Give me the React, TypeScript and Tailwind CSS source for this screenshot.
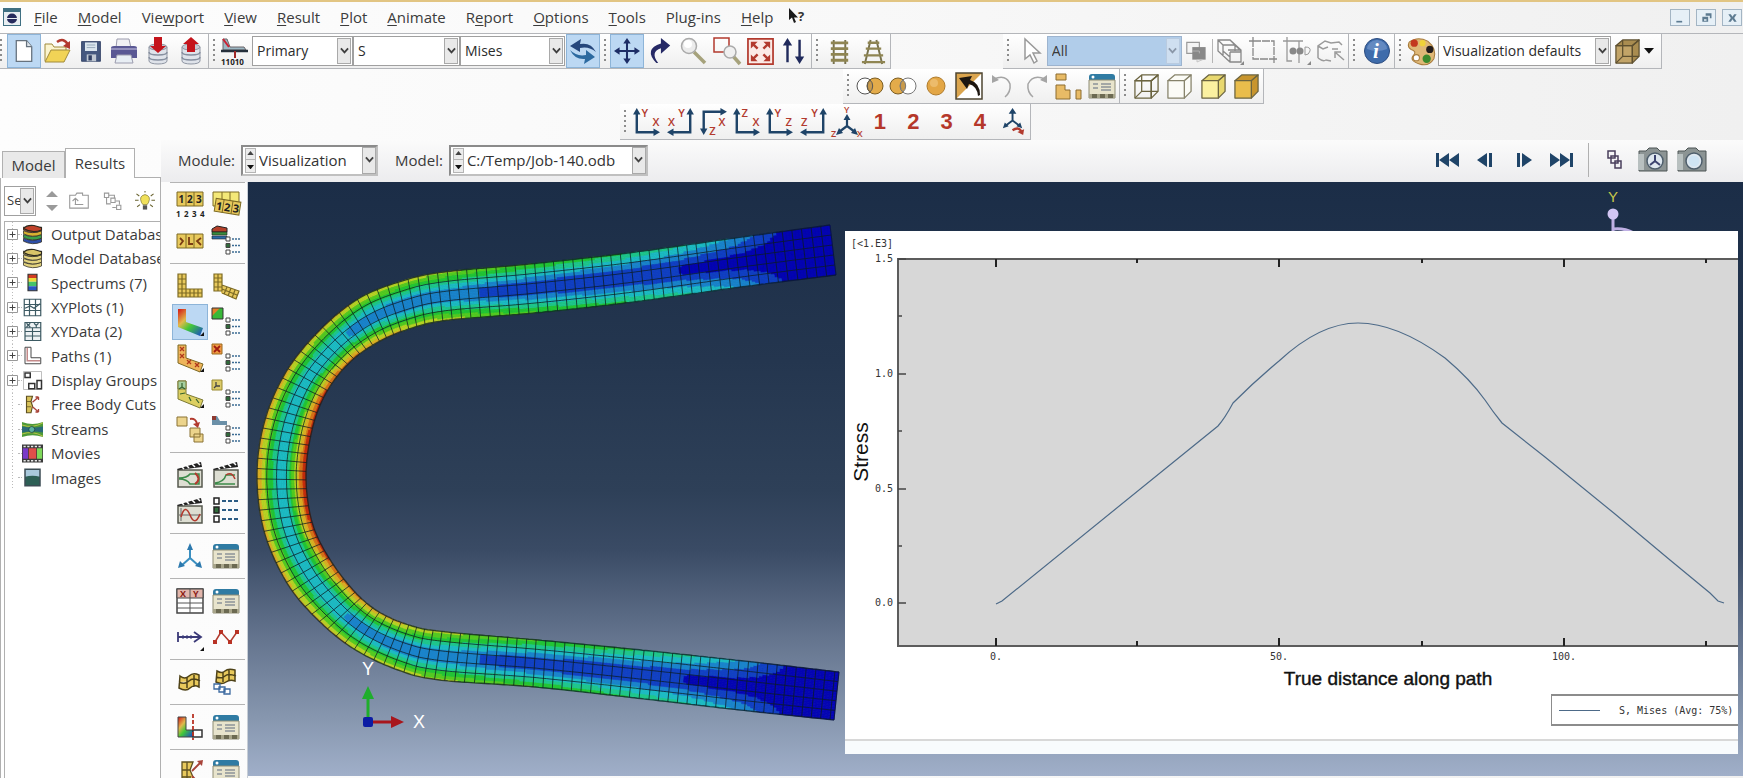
import type { ReactNode } from "react";

const NAVY = "#1f4468";
const RED = "#b23a2e";
const GOLD = "#e8c95c";

/* ---------- small building blocks ---------- */

function Icon({ children, className = "size-7" }: { children: ReactNode; className?: string }) {
    return (
        <svg viewBox="0 0 28 28" fill="none" className={`${className} shrink-0 overflow-visible`} aria-hidden="true">
            {children}
        </svg>
    );
}

function ToolButton({ label, active, children }: { label: string; active?: boolean; children: ReactNode }) {
    return (
        <button
            type="button"
            aria-label={label}
            title={label}
            className={
                active
                    ? "flex h-full flex-1 items-center justify-center border border-[#8db4d8] bg-[#bcd8f3]"
                    : "flex h-full flex-1 items-center justify-center border border-transparent"
            }
        >
            {children}
        </button>
    );
}

function Grip() {
    return <span className="mx-1 h-6 w-[2px] shrink-0 bg-[repeating-linear-gradient(#8c8c8c_0_2px,transparent_2px_5px)]" />;
}

function Toolbar({ className, children }: { className: string; children: ReactNode }) {
    return (
        <div
            role="toolbar"
            className={`flex h-full shrink-0 items-center border-r border-b border-[#b4b6ba] bg-gradient-to-b from-white to-[#efefef] ${className}`}
        >
            {children}
        </div>
    );
}

function Chevron({ dim }: { dim?: boolean }) {
    return (
        <span
            className={
                dim
                    ? "pointer-events-none absolute inset-y-[2px] right-[2px] flex w-[14px] items-center justify-center border border-[#b9cbe0] bg-[#cfdff0] text-[#8a97a8]"
                    : "pointer-events-none absolute inset-y-[2px] right-[2px] flex w-[14px] items-center justify-center border border-[#a9a9a9] bg-[#e9e9e9] text-[#3f3f3f]"
            }
        >
            <svg viewBox="0 0 10 8" className="w-[9px]" aria-hidden="true">
                <path d="M1 1.5 5 6 9 1.5" fill="none" stroke="currentColor" strokeWidth="2" />
            </svg>
        </span>
    );
}

function Combo({ label, value, className, dim }: { label: string; value: string; className: string; dim?: boolean }) {
    return (
        <label className={`relative block h-[30px] shrink-0 text-sm ${className}`}>
            <select
                aria-label={label}
                className={
                    dim
                        ? "h-full w-full appearance-none border border-[#9db4cf] bg-[#b1cdea] pl-1 text-[#3a3a3a]"
                        : "h-full w-full appearance-none border border-[#a0a0a0] bg-white pl-1 text-[#2b2b2b]"
                }
            >
                <option>{value}</option>
            </select>
            <Chevron dim={dim} />
        </label>
    );
}

function SpinCombo({ id, value, className }: { id: string; value: string; className: string }) {
    return (
        <div className={`relative h-[31px] border-2 border-[#8b8b8b] border-r-[#c0c0c0] border-b-[#c0c0c0] bg-white ${className}`}>
            <span className="absolute inset-y-[1px] left-[2px] flex w-[11px] flex-col items-center justify-around border border-[#b5b5b5] bg-[#ececec]">
                <svg viewBox="0 0 8 5" className="w-[7px]" aria-hidden="true">
                    <path d="M0 5 4 0l4 5z" fill="#444" />
                </svg>
                <span className="h-px w-full bg-[#b5b5b5]" />
                <svg viewBox="0 0 8 5" className="w-[7px]" aria-hidden="true">
                    <path d="M0 0 4 5l4-5z" fill="#111" />
                </svg>
            </span>
            <select id={id} className="h-full w-full appearance-none bg-transparent pl-4 text-[15px] text-[#333]">
                <option>{value}</option>
            </select>
            <span className="pointer-events-none absolute inset-y-0 right-0 flex w-[14px] items-center justify-center border border-[#a9a9a9] bg-[#e9e9e9] text-[#444]">
                <svg viewBox="0 0 10 8" className="w-[9px]" aria-hidden="true">
                    <path d="M1 1.5 5 6 9 1.5" fill="none" stroke="currentColor" strokeWidth="2" />
                </svg>
            </span>
        </div>
    );
}

/* ---------- menu bar ---------- */

const MENUS = [
    ["", "F", "ile"],
    ["", "M", "odel"],
    ["Vie", "w", "port"],
    ["", "V", "iew"],
    ["", "R", "esult"],
    ["", "P", "lot"],
    ["", "A", "nimate"],
    ["R", "e", "port"],
    ["", "O", "ptions"],
    ["", "T", "ools"],
    ["Plug-ins", "", ""],
    ["", "H", "elp"],
];

function MenuBar() {
    return (
        <header className="flex h-[33px] shrink-0 items-center border-t-2 border-[#e2c583] pr-[1px] pb-[1px] pl-[3px]">
            <svg viewBox="0 0 18 18" className="mr-[13px] size-[18px]" aria-hidden="true">
                <rect x=".5" y=".5" width="17" height="17" fill="#e8eef2" stroke="#3f6f82" />
                <path d="M1 2.500h16" stroke="#3f6f82" strokeWidth="3" />
                <circle cx="9" cy="10.500" r="5" fill="#262a5c" />
                <path d="M3 10.500h12" stroke="#e8eef2" />
            </svg>
            <nav className="flex gap-5 text-[15px] text-[#3c3c3c]">
                {MENUS.map(([pre, key, post]) => (
                    <button type="button" key={pre + key + post}>
                        {pre}
                        <span className="underline underline-offset-2">{key}</span>
                        {post}
                    </button>
                ))}
            </nav>
            <button type="button" aria-label="Context help" className="ml-[14px]">
                <svg viewBox="0 0 22 20" className="h-5 w-[22px] overflow-visible" aria-hidden="true">
                    <path d="M2 1v12l3-2.500L7 16l2-1-2-4.500h4z" fill="#1a1a1a" />
                    <text x="11" y="14" fontSize="13" fontWeight="700" fill="#333">?</text>
                </svg>
            </button>
            <div className="ml-auto flex gap-[6px]">
                {["M4 13h7v2H4z", "M8 4h7v6h-2V7H8zM4 8h7v6H4zm2 3v2h3v-2z", "M4 5h3l2 3 2-3h3l-3 4.500 3 4.500h-3l-2-3-2 3H4l3-4.500z"].map((d, i) => (
                    <button
                        type="button"
                        key={d}
                        aria-label={["Minimize", "Restore", "Close"][i]}
                        className="flex h-[17px] w-5 items-center justify-center border border-[#a3b5c4] bg-[#e6f0f7]"
                    >
                        <svg viewBox="0 0 18 18" className="size-[15px]" aria-hidden="true">
                            <path d={d} fill="#5d7b91" fillRule="evenodd" />
                        </svg>
                    </button>
                ))}
            </div>
        </header>
    );
}

/* ---------- toolbar icons ---------- */

function DatabaseIcon({ up }: { up?: boolean }) {
    return (
        <Icon>
            <path d="M5 10v14c0 4 18 4 18 0V10z" fill="#dfe3ea" stroke="#8f96a3" />
            <path d="M5 15c0 4 18 4 18 0M5 20c0 4 18 4 18 0" stroke="#8790a0" strokeWidth="1.500" />
            <path d="M5 10c0 4 18 4 18 0s-18-4-18 0" fill="#c7ccd6" stroke="#8f96a3" />
            <path d={up ? "M10 15V7H6l8-7 8 7h-4v8z" : "M10 0h8v9h4l-8 7-8-7h4z"} fill="#c4141c" />
        </Icon>
    );
}

function PanelIcon({ className }: { className?: string }) {
    return (
        <Icon className={className}>
            <path d="M1 5q0-3 3-3h20q3 0 3 3v3H1z" fill="#2f7ba3" />
            <path d="M1 8h26v18H1z" fill="#e8e4cc" stroke="#8e8c74" />
            <circle cx="5" cy="5" r="1.500" fill="#fff" />
            <path d="M5 12h5M5 16h5M13 12h10M13 15h10M13 18h10" stroke="#8c9298" strokeWidth="1.500" />
            <path d="M1 22h26v4H1z" fill="#a8a58a" />
            <path d="M4 22h5v4H4zM12 22h5v4h-5zM20 22h5v4h-5z" fill="#6c6a52" />
        </Icon>
    );
}

function CubeIcon({ front, side, wire, stroke = "#6b6440" }: { front: string; side: string; wire?: boolean; stroke?: string }) {
    return (
        <Icon className="size-[27px]">
            <g stroke={stroke} strokeWidth="1.300" strokeLinejoin="round">
                <path d="M2 8 9 2h17l-7 6z" fill={side} />
                <path d="M19 8l7-6v17l-7 7z" fill={side} />
                <path d="M2 8h17v18H2z" fill={front} />
                {wire && <path d="M9 2v17h17M9 19l-7 7M19 8l7-6M2 8h17v18" />}
            </g>
        </Icon>
    );
}

type AxisProps = { corner: "bl" | "br" | "tl"; a: string; b: string };

function AxisIcon({ corner, a, b }: AxisProps) {
    const shape = {
        bl: { d: "M3 4v21h20", heads: "M3 -1l4 7h-8zM28 25l-7 4v-8z", ax: 8, ay: 9, bx: 20, by: 18 },
        br: { d: "M25 4v21H5", heads: "M25 -1l4 7h-8zM0 25l7 4v-8z", ax: 12, ay: 9, bx: 1, by: 18 },
        tl: { d: "M4 22V3h20", heads: "M4 28l4-7H0zM29 3l-7 4v-8z", ax: 20, ay: 18, bx: 10, by: 28 },
    }[corner];
    return (
        <Icon className="size-[26px]">
            <path d={shape.d} stroke={NAVY} strokeWidth="2.600" />
            <path d={shape.heads} fill={NAVY} />
            <g fill={RED} fontSize="12" fontWeight="600">
                <text x={shape.ax} y={shape.ay}>{a}</text>
                <text x={shape.bx} y={shape.by}>{b}</text>
            </g>
        </Icon>
    );
}

const AXES: AxisProps[] = [
    { corner: "bl", a: "Y", b: "X" },
    { corner: "br", a: "Y", b: "X" },
    { corner: "tl", a: "X", b: "Z" },
    { corner: "bl", a: "Z", b: "X" },
    { corner: "bl", a: "Y", b: "Z" },
    { corner: "br", a: "Y", b: "Z" },
];

function TopToolbar() {
    return (
        <div className="flex h-[36px] shrink-0 border-t border-[#b4b6ba]">
            <Toolbar className="w-[209px]">
                <span className="mr-[5px] h-6 w-[2px] shrink-0 bg-[repeating-linear-gradient(#8c8c8c_0_2px,transparent_2px_5px)]" />
                <ToolButton label="New" active>
                    <Icon className="h-7 w-6">
                        <path d="M5 2h12l6 7v17H5z" fill="#fff" stroke="#66727e" strokeWidth="1.500" />
                        <path d="M17 2v7h6" fill="#dfe6ec" stroke="#66727e" strokeWidth="1.500" />
                    </Icon>
                </ToolButton>
                <ToolButton label="Open">
                    <Icon>
                        <path d="M2 24V7h7l2 3h12v4" fill="#fbf4cf" stroke="#a08a3a" />
                        <path d="M2 25l6-12h19l-6 12z" fill="#f1d356" stroke="#a08a3a" />
                        <path d="M14 5q7-5 11 3" stroke={RED} strokeWidth="2.500" />
                        <path d="M27 4v8l-7-3z" fill={RED} />
                    </Icon>
                </ToolButton>
                <ToolButton label="Save">
                    <Icon className="size-6">
                        <path d="M3 3h22v23H3z" fill="#45587f" stroke="#2f3f63" />
                        <path d="M7 4h14v10H7z" fill="#dbe6ee" />
                        <path d="M9 7h10M9 10h10" stroke="#8fa2b4" />
                        <path d="M9 18h11v8H9z" fill="#c0c8d2" />
                        <path d="M11 19h4v6h-4z" fill="#2f3f63" />
                    </Icon>
                </ToolButton>
                <ToolButton label="Print">
                    <Icon>
                        <path d="M7 2h12l2 9H6z" fill="#f0f0f4" stroke="#9c9cae" />
                        <path d="M1 11q0-2 3-2h20q3 0 3 2v10H1z" fill="#5a5894" />
                        <path d="M1 12h26" stroke="#9390bd" strokeWidth="2" />
                        <path d="M7 18h14l2 8H5z" fill="#e8eef4" stroke="#9c9cae" />
                    </Icon>
                </ToolButton>
                <ToolButton label="Save to database">
                    <DatabaseIcon />
                </ToolButton>
                <ToolButton label="Load from database">
                    <DatabaseIcon up />
                </ToolButton>
            </Toolbar>
            <Toolbar className="w-[603px]">
                <Grip />
                <Icon className="mr-[3px] ml-[2px] h-[30px] w-7">
                    <path d="M2 2h4l3 8h14l2 3H2z" fill="#9db8c4" stroke="#6a6468" />
                    <path d="M2 2l6 8" stroke="#c23" strokeWidth="2" />
                    <path d="M0 14h27" stroke="#26303c" strokeWidth="2.500" />
                    <path d="M14 14v7" stroke="#a02828" strokeWidth="2" />
                    <text x="0" y="28" fontSize="8" fontWeight="700" fill="#222">11010</text>
                </Icon>
                <Combo label="Variable type" value="Primary" className="w-[101px]" />
                <Combo label="Output variable" value="S" className="w-[107px]" />
                <Combo label="Invariant" value="Mises" className="mr-[1px] w-[105px]" />
                <div className="flex h-full w-[34px] shrink-0">
                    <ToolButton label="Sync" active>
                        <Icon>
                            <path d="M27 15Q22 5 11 7l1-5-11 7 10 6 0-4q9-2 16 4z" fill="#26477c" />
                            <path d="M1 13q5 10 15 9l-1 5 11-7-9-7v5q-9 2-16-5z" fill="#2c6aa0" />
                        </Icon>
                    </ToolButton>
                </div>
                <Grip />
                <ToolButton label="Pan view" active>
                    <Icon className="size-[26px]">
                        <path d="M14 3v22M3 14h22" stroke="#1d2d66" strokeWidth="2.200" />
                        <path d="M14 0l4 6h-8zM14 28l4-6h-8zM0 14l6-4v8zM28 14l-6-4v8z" fill="#1d2d66" />
                    </Icon>
                </ToolButton>
                <ToolButton label="Rotate view">
                    <Icon className="size-[26px]">
                        <path d="M10 27Q-4 12 15 6V0l10 8-10 9v-6Q3 15 12 27z" fill="#262a66" />
                    </Icon>
                </ToolButton>
                <ToolButton label="Magnify view">
                    <Icon>
                        <path d="M14 15l11 11" stroke="#a6a27c" strokeWidth="3.500" />
                        <circle cx="9" cy="9" r="7.500" fill="#ececec" stroke="#aaa" strokeWidth="1.500" />
                        <circle cx="8" cy="7" r="4" fill="#fff" />
                    </Icon>
                </ToolButton>
                <ToolButton label="Box zoom">
                    <Icon>
                        <path d="M1 1h15v14H1z" stroke={RED} strokeWidth="1.500" />
                        <path d="M20 19l7 8" stroke="#a6a27c" strokeWidth="3.500" />
                        <circle cx="17" cy="15" r="6" fill="#f0f0f0" stroke="#aaa" strokeWidth="1.500" />
                    </Icon>
                </ToolButton>
                <ToolButton label="Auto-fit view">
                    <Icon className="size-[27px]">
                        <path d="M1 1h26v26H1z" fill="#fbeae6" stroke={RED} strokeWidth="1.800" />
                        <path d="M6 6l5 5M22 6l-5 5M6 22l5-5M22 22l-5-5" stroke={RED} strokeWidth="2.500" />
                        <path d="M4 4h7l-7 7zM24 4v7l-7-7zM4 24v-7l7 7zM24 24h-7l7-7z" fill={RED} />
                    </Icon>
                </ToolButton>
                <ToolButton label="Cycle views">
                    <Icon className="size-[26px]">
                        <path d="M7 26V5M20 2v21" stroke="#202a5c" strokeWidth="2.600" />
                        <path d="M7 0l5 8H2zM20 28l5-8H15z" fill="#202a5c" />
                    </Icon>
                </ToolButton>
            </Toolbar>
            <Toolbar className="w-[79px]">
                <Grip />
                <ToolButton label="Parallel projection">
                    <Icon className="size-[27px]">
                        <path d="M8 2v25M20 2v25" stroke="#77714c" strokeWidth="2" />
                        <path d="M5 5h18M5 11h18M5 17h18M5 23h18" stroke="#8f8552" strokeWidth="3" />
                    </Icon>
                </ToolButton>
                <ToolButton label="Perspective projection">
                    <Icon className="size-[27px]">
                        <path d="M11 2 5 27M17 2l6 25" stroke="#77714c" strokeWidth="2" />
                        <path d="M8 5h12M6 11h16M4 18h20M2 25h24" stroke="#8f8552" strokeWidth="2.500" />
                    </Icon>
                </ToolButton>
            </Toolbar>
            <Toolbar className="ml-[112px] w-[346px]">
                <Grip />
                <ToolButton label="Select">
                    <Icon>
                        <path d="M9 2v20l5-4 4 8 3-2-4-8h7z" fill="#fff" stroke="#999" strokeWidth="1.500" />
                    </Icon>
                </ToolButton>
                <Combo label="Selection filter" value="All" className="w-[135px]" dim />
                <Icon className="mx-1 h-7 w-[22px]">
                    <path d="M1 3h16v14H1z" fill="#f4f4f4" stroke="#999" strokeWidth="1.500" />
                    <path d="M8 9h17v16H8z" fill="#888" />
                    <path d="M8 14h9v3M14 28v-3h7z" stroke="#bbb" />
                </Icon>
                <span className="h-6 w-px bg-[#b5b5b5]" />
                <ToolButton label="Select from cube">
                    <Icon>
                        <g stroke="#888" strokeWidth="1.300">
                            <path d="M2 3h12l11 10v12H14L2 14zM2 3l5 5v11M14 3l5 5v6M7 8h12l6 6M12 13h13M14 15h11M14 15v10M7 14l7 6" />
                        </g>
                        <path d="M28 28v-4l-4 4z" fill="#888" />
                    </Icon>
                </ToolButton>
                <ToolButton label="Rectangle select">
                    <Icon>
                        <path d="M4 4h21v18H4zM0 4h8M4 0v8M22 22h6M25 19v7" stroke="#888" strokeWidth="1.300" strokeDasharray="8 1" />
                    </Icon>
                </ToolButton>
                <ToolButton label="Inside and crossing">
                    <Icon>
                        <path d="M0 4h20M4 0v24h5M16 4v22" stroke="#999" strokeWidth="1.300" />
                        <circle cx="10" cy="14" r="3.500" fill="#888" />
                        <circle cx="17" cy="14" r="3.500" fill="#888" />
                        <path d="M22 10q6 0 5 4t-5 4z" stroke="#999" />
                        <path d="M28 28v-4l-4 4z" fill="#888" />
                    </Icon>
                </ToolButton>
                <ToolButton label="Select options">
                    <Icon>
                        <path d="M1 21V9l7-5 6 2 8-1 3 3M1 9l5 3 5-2M1 21q5 4 8 2l5 1M15 12h6M27 23l-8-7M18 21v-6h6" stroke="#9a9a9a" strokeWidth="1.500" />
                    </Icon>
                </ToolButton>
            </Toolbar>
            <Toolbar className="w-[46px]">
                <Grip />
                <ToolButton label="Information">
                    <Icon>
                        <circle cx="14" cy="14" r="12.500" fill="#3f6cab" stroke="#2c4c80" />
                        <path d="M4 12a10 9 0 0 1 20 0q-10 4-20 0" fill="#7d9fd0" opacity=".6" />
                        <text x="10" y="21" fontSize="21" fontStyle="italic" fontWeight="700" fill="#fff" fontFamily="Liberation Serif">i</text>
                    </Icon>
                </ToolButton>
            </Toolbar>
            <Toolbar className="w-[267px]">
                <Grip />
                <ToolButton label="Color palette">
                    <Icon className="size-[29px]">
                        <path d="M2 5q8-6 18-1 9 7 6 17-5 8-14 5-10-3-6-8 4-4-2-6-4-2-2-7" fill="#dfb877" stroke="#a87c3c" />
                        <circle cx="7" cy="6" r="3.500" fill="#c3381f" />
                        <circle cx="15" cy="6" r="3" fill="#efd23a" />
                        <circle cx="22" cy="12" r="3.500" fill="#221c1c" />
                        <circle cx="19" cy="21" r="4" fill="#3c8a2c" />
                        <circle cx="9" cy="20" r="3" fill="#fff" stroke="#a87c3c" />
                    </Icon>
                </ToolButton>
                <Combo label="Color mapping" value="Visualization defaults" className="w-[173px]" />
                <ToolButton label="Translucency">
                    <CubeIcon front="#c2a468" side="#a98c50" wire stroke="#5e5030" />
                </ToolButton>
                <button type="button" aria-label="More" className="mr-[3px] w-[14px]">
                    <svg viewBox="0 0 12 8" className="w-[10px]" aria-hidden="true">
                        <path d="M0 0h12L6 7z" fill="#111" />
                    </svg>
                </button>
            </Toolbar>
        </div>
    );
}

function DisplayToolbar() {
    return (
        <div className="flex h-[35px] shrink-0">
            <Toolbar className="ml-[843px] w-[277px]">
                <Grip />
                <ToolButton label="Replace">
                    <Icon>
                        <circle cx="9" cy="14" r="8" fill="#fff" stroke="#555" />
                        <circle cx="19" cy="14" r="8" fill="#e3ab4a" stroke="#7a5c22" />
                        <path d="M14 8a8 8 0 0 0 0 12 8 8 0 0 0 0-12" fill="#c99a4a" stroke="#555" />
                    </Icon>
                </ToolButton>
                <ToolButton label="Remove">
                    <Icon>
                        <circle cx="9" cy="14" r="8" fill="#e3ab4a" stroke="#7a5c22" />
                        <circle cx="19" cy="14" r="8" fill="#fff" stroke="#777" />
                        <path d="M14 8a8 8 0 0 1 0 12 8 8 0 0 1 0-12" fill="#c99a4a" stroke="#777" />
                    </Icon>
                </ToolButton>
                <ToolButton label="Intersect">
                    <Icon>
                        <circle cx="14" cy="14" r="9" fill="#e3a645" stroke="#b07c2c" />
                        <circle cx="12" cy="11" r="4" fill="#efc57c" opacity=".7" />
                    </Icon>
                </ToolButton>
                <ToolButton label="Either">
                    <Icon className="size-[28px]">
                        <path d="M1 1h26v26H1z" fill="#fff" />
                        <path d="M1 1h26L1 27z" fill="#dba54e" />
                        <path d="M1 1h26v26H1z" stroke="#4e4632" strokeWidth="1.500" />
                        <path d="M23 24Q22 14 14 12l-2 5L4 6l13-2-2 4q10 3 10 15z" fill="#1c1610" />
                    </Icon>
                </ToolButton>
                <ToolButton label="Undo">
                    <Icon>
                        <path d="M5 7q12-5 16 5 1 8-5 13" stroke="#a5a5a5" strokeWidth="1.500" />
                        <path d="M3 3v8l7-3z" fill="#a5a5a5" />
                    </Icon>
                </ToolButton>
                <ToolButton label="Redo">
                    <Icon>
                        <path d="M23 7Q11 2 6 12q-1 8 5 13" stroke="#a5a5a5" strokeWidth="1.500" />
                        <path d="M25 3v8l-7-3z" fill="#a5a5a5" />
                    </Icon>
                </ToolButton>
                <ToolButton label="Create display group">
                    <Icon>
                        <g fill="#e8bb66" stroke="#8c6c30">
                            <path d="M1 2h10v6H1z" />
                            <path d="M1 13h9v5h5v9H1z" />
                            <path d="M21 18h5v9h-5z" />
                        </g>
                    </Icon>
                </ToolButton>
                <ToolButton label="Display group manager">
                    <PanelIcon />
                </ToolButton>
            </Toolbar>
            <Toolbar className="w-[144px]">
                <Grip />
                <ToolButton label="Wireframe">
                    <CubeIcon front="none" side="none" wire />
                </ToolButton>
                <ToolButton label="Hidden">
                    <CubeIcon front="#fbfbf6" side="#fbfbf6" stroke="#86826a" />
                </ToolButton>
                <ToolButton label="Filled">
                    <CubeIcon front="#fbf1a0" side="#e8d870" />
                </ToolButton>
                <ToolButton label="Shaded">
                    <CubeIcon front="#e9bd4c" side="#c8952e" />
                </ToolButton>
            </Toolbar>
        </div>
    );
}

function ViewToolbar() {
    return (
        <div className="flex h-[36px] shrink-0">
            <Toolbar className="ml-[620px] w-[411px]">
                <Grip />
                {AXES.map((axis, i) => (
                    <ToolButton key={i} label={`View ${axis.a}${axis.b}`}>
                        <AxisIcon {...axis} />
                    </ToolButton>
                ))}
                <ToolButton label="Isometric view">
                    <Icon>
                        <path d="M14 10v9M14 18l-8 6M14 18l8 6" stroke={NAVY} strokeWidth="2.200" />
                        <path d="M14 6l3.500 6h-7zM3 27l3-7 4 5zM25 27l-3-7-4 5z" fill={NAVY} />
                        <g fill={RED} fontSize="9" fontWeight="600">
                            <text x="11" y="5">Y</text>
                            <text x="-2" y="29">Z</text>
                            <text x="24" y="29">X</text>
                        </g>
                    </Icon>
                </ToolButton>
                {["1", "2", "3", "4"].map((n) => (
                    <ToolButton key={n} label={`User view ${n}`}>
                        <span className="font-['Liberation_Sans',sans-serif] text-[22px] leading-none font-bold text-[#b5372a]">{n}</span>
                    </ToolButton>
                ))}
                <ToolButton label="Save view">
                    <Icon className="size-[27px]">
                        <path d="M13 4v10M13 13l-8 6M13 13l8 6" stroke={NAVY} strokeWidth="2" />
                        <path d="M13 0l4 6H9zM3 21l2-6 4 4zM23 21l-2-6-4 4z" fill={NAVY} />
                        <path d="M13 23q6-4 9 1" stroke={RED} strokeWidth="2.500" />
                        <path d="M25 22l-1 6-6-3z" fill={RED} />
                    </Icon>
                </ToolButton>
            </Toolbar>
        </div>
    );
}

/* ---------- results tree ---------- */

function stack(colors: string[]) {
    return (
        <>
            {colors.map((c, i) => (
                <path key={i} d={`M2 ${19 - i * 5}v4q12 6 24 1v-5q-12 5-24 0`} fill={c} stroke="#2c2a20" />
            ))}
            <path d="M2 6q4-5 14-4l10 3v3q-12 5-24-2" fill={colors[colors.length - 1]} stroke="#2c2a20" strokeWidth="1.500" />
        </>
    );
}

const TREE: { name: string; open?: boolean; icon: ReactNode }[] = [
    { name: "Output Databases", open: true, icon: stack(["#2e4fa8", "#3aa04a", "#d8b030", "#c0422a"]) },
    { name: "Model Database", open: true, icon: stack(["#e2d27e", "#e2d27e", "#e2d27e", "#d8c468"]) },
    {
        name: "Spectrums (7)",
        open: true,
        icon: (
            <>
                <path d="M8 3h12v6H8z" fill="#d23b20" />
                <path d="M8 8h12v5H8z" fill="#ecd93a" />
                <path d="M8 13h12v6H8z" fill="#45c26a" />
                <path d="M8 19h12v6H8z" fill="#2a55c4" />
                <path d="M8 3h12v22H8z" stroke="#333" strokeWidth="1.500" />
            </>
        ),
    },
    {
        name: "XYPlots (1)",
        open: true,
        icon: <path d="M3 3h22v22H3zM10 3v22M18 3v22M3 10h22M3 18h22M4 15l7-3 5 3 8-6" stroke="#3d5a63" strokeWidth="1.600" />,
    },
    {
        name: "XYData (2)",
        open: true,
        icon: (
            <>
                <path d="M4 2h21v24H4z" fill="#eef2f4" stroke="#3d5a63" strokeWidth="1.600" />
                <path d="M4 9h21M4 14h21M4 20h21M14 9v17M6 3l5 5M11 3 6 8M16 3l3 3 3-3M19 6v3" stroke="#3d5a63" strokeWidth="1.500" />
            </>
        ),
    },
    {
        name: "Paths (1)",
        open: true,
        icon: (
            <>
                <path d="M4 3h8v14h13v8H4z" fill="#fff" stroke="#444" strokeWidth="1.300" />
                <path d="M7 4v17h17" stroke="#c48a8a" strokeWidth="2" />
            </>
        ),
    },
    {
        name: "Display Groups (1)",
        open: true,
        icon: (
            <>
                <path d="M2 2h24v24H2z" fill="#fff" stroke="#aaa" />
                <path d="M4 4h7v6H4zM9 18h8v7H9zM20 14h6v11h-6z" stroke="#333" strokeWidth="2" />
            </>
        ),
    },
    {
        name: "Free Body Cuts",
        icon: (
            <>
                <path d="M6 3h8l-2 7 2 6-2 9H6z" fill="#d8c25a" stroke="#5e5020" strokeWidth="1.500" />
                <path d="M6 10h6M6 17h6" stroke="#5e5020" />
                <path d="M14 11l8-7M14 17l8 7M22 4h-4M22 4v4M22 24h-4M22 24v-4" stroke="#a8443a" strokeWidth="1.800" />
            </>
        ),
    },
    {
        name: "Streams",
        icon: (
            <>
                <path d="M0 4q14 5 28 0v20q-14-5-28 0z" fill="#4e9a38" />
                <path d="M0 10q14 3 28 0v8q-14-3-28 0z" fill="#2a6a78" />
                <path d="M0 8q14 5 28-3M0 20q14-5 28 3" stroke="#d8d04a" />
                <circle cx="13" cy="14" r="4" fill="#5ab0a0" stroke="#163c3c" />
            </>
        ),
    },
    {
        name: "Movies",
        icon: (
            <>
                <path d="M0 2h28v24H0z" fill="#3a3a3a" />
                <path d="M1 7h7v14H1z" fill="#7a3ac8" />
                <path d="M9 7h10v14H9z" fill="#e04e4a" />
                <path d="M20 7h7v14h-7z" fill="#7ed85a" />
                <path d="M2 4.500h25M2 23.500h25" stroke="#e8e8e8" strokeWidth="2" strokeDasharray="3 2" />
            </>
        ),
    },
    {
        name: "Images",
        icon: (
            <>
                <path d="M4 3h20v22H4z" fill="#a9c9dc" />
                <path d="M4 13q10-3 20 0v12H4z" fill="#2d5f55" />
                <path d="M4 3h20v22H4z" stroke="#3c4c54" strokeWidth="2" />
            </>
        ),
    },
];

function ResultsPanel() {
    return (
        <aside className="flex w-[161px] shrink-0 flex-col pt-[8px] text-[15px] text-[#3a3a3a]">
            <div role="tablist" className="flex h-[30px] items-end pl-[2px]">
                <button role="tab" type="button" className="h-[27px] w-[63px] border border-b-0 border-[#b0b0b0] bg-[#e9e9e9]">
                    Model
                </button>
                <button role="tab" type="button" aria-selected="true" className="h-full w-[70px] border border-b-0 border-[#b0b0b0] bg-white">
                    Results
                </button>
                <span className="flex-1 border-b border-[#b0b0b0]" />
            </div>
            <div className="flex min-h-0 flex-1 flex-col border-r border-l border-[#b0b0b0] bg-white pt-[8px] pl-[3px]">
                <div className="flex h-[30px] items-center">
                    <label className="relative block h-full w-8">
                        <select aria-label="Results source" className="h-full w-full appearance-none border border-[#a0a0a0] bg-white pl-[2px] text-[13px]">
                            <option>Se</option>
                        </select>
                        <Chevron />
                    </label>
                    <button type="button" aria-label="Sort" className="ml-[10px]">
                        <svg viewBox="0 0 12 20" className="h-5 w-3" aria-hidden="true">
                            <path d="M6 0l6 6H0zM6 20l6-6H0z" fill="#9a9a9a" />
                        </svg>
                    </button>
                    <button type="button" aria-label="Up one level" className="ml-[11px]">
                        <Icon className="size-[20px]">
                            <path d="M1 6h8l2-3h8v3h8v18H1zM8 19h12M9 19v-8M5 14l4-4 4 4" stroke="#999" strokeWidth="1.500" />
                        </Icon>
                    </button>
                    <button type="button" aria-label="Expand" className="ml-[14px]">
                        <Icon className="size-[20px]">
                            <path d="M2 3h6v6H2zM11 10h6v6h-6zM19 20h6v6h-6zM8 6h8v4M5 9v9h6M18 14h5v5M13 23h5" stroke="#999" strokeWidth="1.500" />
                        </Icon>
                    </button>
                    <button type="button" aria-label="Tips" className="ml-[12px]">
                        <Icon className="size-[20px]">
                            <path d="M9 16q-4-9 5-11 9 2 5 11l-2 3h-6z" fill="#f0e05a" stroke="#7c7430" />
                            <path d="M11 20h6v6h-6z" fill="#555" />
                            <path d="M2 4l4 3M26 4l-4 3M0 13h5M28 13h-5M3 22l4-3M25 22l-4-3M14 0v2" stroke="#6a6430" strokeWidth="1.500" />
                        </Icon>
                    </button>
                </div>
                <div className="mt-[5px] min-h-0 flex-1 overflow-hidden border-t border-l border-[#b0b0b0]">
                    <ul role="tree" className="grid h-[268px] auto-rows-fr">
                        {TREE.map((node) => (
                            <li role="treeitem" key={node.name} className="flex items-center whitespace-nowrap">
                                <span className="ml-[2px] flex w-[11px] items-center justify-center self-stretch bg-[repeating-linear-gradient(#bbb_0_1px,transparent_1px_3px)] bg-[length:1px_100%] bg-center bg-no-repeat">
                                    {node.open && (
                                        <svg viewBox="0 0 11 11" className="size-[11px]" aria-hidden="true">
                                            <path d="M.5.5h10v10H.5z" fill="#fff" stroke="#999" />
                                            <path d="M2.500 5.500h6M5.500 2.500v6" stroke="#444" />
                                        </svg>
                                    )}
                                </span>
                                <span className="w-[4px] border-t border-dotted border-[#bbb]" />
                                <Icon className="mr-[8px] size-[21px]">{node.icon}</Icon>
                                {node.name}
                            </li>
                        ))}
                    </ul>
                </div>
            </div>
        </aside>
    );
}

/* ---------- module toolbox ---------- */

function Options({ children }: { children?: ReactNode }) {
    return (
        <>
            {children}
            {[12, 18.5, 25].map((y, i) => (
                <g key={y}>
                    <path d={`M14 ${y - 2}h4v4h-4z`} fill={i === 1 ? "#2f6b3a" : "#fff"} stroke="#444" />
                    <path d={`M20 ${y}h8`} stroke="#3c6c94" strokeWidth="1.500" strokeDasharray="2 1" />
                </g>
            ))}
        </>
    );
}

function Clapper({ children }: { children: ReactNode }) {
    return (
        <>
            <path d="M2 9h24v17H2z" fill="#ddded2" stroke="#55584e" strokeWidth="1.500" />
            <path d="M1 8 25 1l1 5L2 9z" fill="#222" />
            <path d="M5 5l3 3M10 4l3 3M16 3l3 3M21 1l3 3" stroke="#fff" strokeWidth="1.500" />
            {children}
        </>
    );
}

const tab = <path d="M28 28v-4l-4 4z" fill="#111" />;
const bent = "M2 1h8v13l17 6-3 8L2 19z";

const TOOLBOX: { label: string; icon?: ReactNode; active?: boolean }[][] = [
    [
        {
            label: "Common options",
            icon: (
                <>
                    <path d="M1 1h26v14H1z" fill={GOLD} stroke="#7c6a24" />
                    <path d="M10 1v14M18 1v14" stroke="#7c6a24" />
                    <g fill="#222" fontWeight="700">
                        <text x="2.500" y="12" fontSize="10">1</text>
                        <text x="11" y="12" fontSize="10">2</text>
                        <text x="20" y="12" fontSize="10">3</text>
                        <text x="0" y="26" fontSize="8">1</text>
                        <text x="8" y="26" fontSize="8">2</text>
                        <text x="16" y="26" fontSize="8">3</text>
                        <text x="24" y="26" fontSize="8">4</text>
                    </g>
                </>
            ),
        },
        {
            label: "Superimpose options",
            icon: (
                <>
                    <path d="M1 1h26v14H1zM10 1v14M18 1v14" fill="#f4e878" stroke="#7c6a24" />
                    <g transform="rotate(9 14 16)">
                        <path d="M3 9h25v13H3z" fill={GOLD} stroke="#7c6a24" />
                        <path d="M11 9v13M20 9v13" stroke="#7c6a24" />
                        <text x="4" y="20" fontSize="11" fontWeight="700" fill="#222">1</text>
                        <text x="12" y="20" fontSize="11" fontWeight="700" fill="#222">2</text>
                        <text x="21" y="20" fontSize="11" fontWeight="700" fill="#222">3</text>
                    </g>
                </>
            ),
        },
        {
            label: "Contour labels",
            icon: (
                <>
                    <path d="M1 7h26v14H1z" fill={GOLD} stroke="#7c6a24" />
                    <path d="M10 7v14M18 7v14" stroke="#7c6a24" />
                    <path d="M4 11l3 3-3 4M13 10v7h4M25 11l-4 3 4 4" stroke="#7a3c14" strokeWidth="1.800" />
                </>
            ),
        },
        {
            label: "Result options",
            icon: (
                <Options>
                    <path d="M0 2l5-3 10 2v4H0z" fill="#b4402a" stroke="#222" />
                    <path d="M0 5h15v3H0z" fill="#3a8c3e" stroke="#222" strokeWidth=".6" />
                    <path d="M0 9h15v3H0z" fill="#2c6aa8" stroke="#222" strokeWidth=".6" />
                </Options>
            ),
        },
    ],
    [
        {
            label: "Plot undeformed shape",
            icon: <path d="M2 2h8v15h16v8H2zM6 2v23M2 7h8M2 12h8M2 17h8v8M2 21h24M14 17v8M18 17v8M22 17v8" fill={GOLD} stroke="#7c6a24" strokeWidth="1.200" />,
        },
        {
            label: "Plot deformed shape",
            icon: (
                <>
                    <path d="M2 2h8v17H2z" fill={GOLD} />
                    <path d="M9 13l18 6-3 8-15-6z" fill={GOLD} />
                    <path
                        d="M2 2h8v17H2zM6 2v17M2 6h8M2 10h8M2 15h8M10 13l17 6-3 8-14-6M10 17l15 6M15 15l-3 7M19 16l-3 8M23 18l-3 8"
                        stroke="#7c6a24"
                        strokeWidth="1.200"
                    />
                </>
            ),
        },
        {
            label: "Plot contours",
            active: true,
            icon: (
                <>
                    <defs>
                        <linearGradient id="lshape" x1="0" y1="0" x2=".9" y2="1">
                            <stop offset="0.050" stopColor="#d42a1c" />
                            <stop offset=".35" stopColor="#e2b84c" />
                            <stop offset=".6" stopColor="#42c838" />
                            <stop offset="1" stopColor="#1a50c4" />
                        </linearGradient>
                    </defs>
                    <path d={bent} fill="url(#lshape)" />
                    {tab}
                </>
            ),
        },
        {
            label: "Contour options",
            icon: (
                <Options>
                    <path d="M0 0h11v11H0z" fill="#38b838" />
                    <path d="M0 0h8L0 8z" fill="#e2802a" />
                    <path d="M0 0h11v11H0z" stroke="#333" />
                </Options>
            ),
        },
        {
            label: "Plot symbols",
            icon: (
                <>
                    <path d={bent} fill="#eeb45a" stroke="#7c6a24" />
                    <path d="M4 3l4 4M8 3 4 7M4 10l4 4M8 10l-4 4M11 16l4 4M15 16l-4 4M19 19l4 4M23 19l-4 4" stroke="#b0381c" strokeWidth="1.300" />
                    {tab}
                </>
            ),
        },
        {
            label: "Symbol options",
            icon: (
                <Options>
                    <path d="M0 0h10v10H0z" fill="#ef9a42" stroke="#9a6a20" />
                    <path d="M2 2l6 6M8 2 2 8" stroke="#a01c10" strokeWidth="1.800" />
                </Options>
            ),
        },
        {
            label: "Plot orientations",
            icon: (
                <>
                    <path d={bent} fill="#dccf62" stroke="#7c7a34" />
                    <path d="M2 1h8v8H2z" fill="#a6d0a0" stroke="#7c7a34" />
                    <path d="M6 3v4l-3 2M6 7l3 2M4 14l5-1M13 17l2 4M20 19l3 4" stroke="#35622e" strokeWidth="1.200" />
                    {tab}
                </>
            ),
        },
        {
            label: "Orientation options",
            icon: (
                <Options>
                    <path d="M0 0h10v10H0z" fill="#dccb6a" stroke="#9a8a30" />
                    <path d="M4 2v4L2 8M4 6l4 0" stroke="#444" strokeWidth="1.300" />
                </Options>
            ),
        },
        {
            label: "Allow multiple states",
            icon: (
                <>
                    <path d="M1 1h10v9H1zM14 12h10v9H14zM18 18h9v8h-9z" fill="#ecd48c" stroke="#8a7234" />
                    <path d="M14 3q6-1 7 5" stroke={RED} strokeWidth="2" />
                    <path d="M24 6l-2 6-5-4z" fill={RED} />
                </>
            ),
        },
        {
            label: "State options",
            icon: (
                <Options>
                    <path d="M0 0h5l3 5h7v4H0z" fill="#6b90a8" />
                    <path d="M0 0h4v4H0z" fill="#8e3a30" />
                </Options>
            ),
        },
    ],
    [
        {
            label: "Animate scale factor",
            icon: (
                <Clapper>
                    <path d="M3 17q8 0 11-4h9v10H14q-3-5-11-5" stroke="#3d8a4a" strokeWidth="1.500" />
                    <path d="M19 12q7 6 0 11" stroke={RED} strokeWidth="2" />
                </Clapper>
            ),
        },
        {
            label: "Animate time history",
            icon: (
                <Clapper>
                    <path d="M3 23h20M3 22Q12 21 14 14h9" stroke="#3d8a4a" strokeWidth="1.500" />
                    <path d="M14 14q6-4 9 4" stroke={RED} strokeWidth="1.500" />
                </Clapper>
            ),
        },
        {
            label: "Animate harmonic",
            icon: (
                <Clapper>
                    <path d="M5 11v13M3 18h22" stroke="#666" />
                    <path d="M5 20q4-14 9-2t10-1" stroke={RED} strokeWidth="1.600" />
                </Clapper>
            ),
        },
        {
            label: "Animation options",
            icon: (
                <>
                    {[4, 13, 22].map((y, i) => (
                        <g key={y}>
                            <path d={`M2 ${y - 3}h5v6H2z`} fill={i === 1 ? "#2f6b3a" : "#fff"} stroke="#222" strokeWidth="1.500" />
                            <path d={`M10 ${y}h17`} stroke="#2c5c84" strokeWidth="2" strokeDasharray="4 2" />
                        </g>
                    ))}
                </>
            ),
        },
    ],
    [
        {
            label: "Create coordinate system",
            icon: (
                <>
                    <path d="M14 5v11L5 24M14 16l9 8" stroke="#3b8fc0" strokeWidth="2" />
                    <path d="M14 1l3 7h-6zM2 26l2-7 5 5zM26 26l-2-7-5 5z" fill="#2c79ae" />
                </>
            ),
        },
        { label: "Coordinate system manager" },
    ],
    [
        {
            label: "Create XY data",
            icon: (
                <>
                    <path d="M1 2h26v24H1z" fill="#fff" stroke="#444" strokeWidth="1.500" />
                    <path d="M1 2h26v9H1z" fill="#e2b6ac" stroke="#444" />
                    <path d="M1 16h26M1 21h26M14 2v24" stroke="#555" />
                    <text x="4" y="10" fontSize="9" fontWeight="700" fill="#8a1c14">X</text>
                    <text x="17" y="10" fontSize="9" fontWeight="700" fill="#8a1c14">Y</text>
                </>
            ),
        },
        { label: "XY data manager" },
        {
            label: "Query",
            icon: (
                <>
                    <path d="M2 9v10M2 14h22M18 9l7 5-7 5" stroke="#3b3a78" strokeWidth="1.800" />
                    <path d="M7 12v4M11 12v4M15 12v4" stroke="#3b3a78" />
                    {tab}
                </>
            ),
        },
        {
            label: "XY options",
            icon: (
                <>
                    <path d="M3 19 9 9l9 10 7-10" stroke={RED} strokeWidth="1.500" />
                    <path d="M1 17h4v4H1zM7 7h4v4H7zM16 17h4v4h-4zM23 7h4v4h-4z" fill="#b83224" />
                </>
            ),
        },
    ],
    [
        {
            label: "Create view cut",
            icon: <path d="M4 8q5 4 9 0t10-1v12q-5-3-9 1t-11 0zM11 9v11M18 7v12M3 14q6 3 10-1t11 0" fill={GOLD} stroke="#4e4218" strokeWidth="1.500" />,
        },
        {
            label: "View cut manager",
            icon: (
                <>
                    <path d="M5 3q5 3 8 0t10-1v11q-5-2-9 1t-10 0zM11 4v10M17 2v11M4 9q6 2 9-1t11 0" fill={GOLD} stroke="#4e4218" strokeWidth="1.500" />
                    <path d="M2 16h6v5H2zM7 19h6v5H7zM12 21h6v5h-6z" fill="#fff" stroke="#3c6aa0" strokeWidth="1.300" />
                </>
            ),
        },
    ],
    [
        {
            label: "Activate view cut",
            icon: (
                <>
                    <path d="M2 4h8v13h7v7H2z" fill="url(#lshape)" stroke="#444" />
                    <path d="M17 17h9v7h-9z" fill="#fff" stroke="#333" strokeWidth="1.500" />
                    <path d="M17 1v26" stroke="#b83224" strokeWidth="1.800" strokeDasharray="4 2" />
                </>
            ),
        },
        { label: "Cut options" },
    ],
    [
        {
            label: "Free body cut",
            icon: (
                <>
                    <path d="M6 4h11l-3 8 3 7-3 8H6zM6 12h8M6 19h9M11 4v23" fill={GOLD} stroke="#5e5020" strokeWidth="1.300" />
                    <path d="M16 13l8-8M16 18l8 8" stroke="#a8443a" strokeWidth="1.800" />
                    <path d="M27 2l-1 6-5-5zM27 28l-6-1 5-5z" fill="#a8443a" />
                </>
            ),
        },
        { label: "Free body manager" },
    ],
];

function Toolbox() {
    return (
        <div className="mr-[2px] ml-[9px] w-[75px] shrink-0 overflow-hidden">
            {TOOLBOX.map((group) => (
                <div key={group[0].label} className="grid grid-cols-[36px_36px] border-t border-[#b4b4b4] py-1 pl-[2px]">
                    {group.map((tool) => (
                        <button
                            type="button"
                            key={tool.label}
                            aria-label={tool.label}
                            title={tool.label}
                            className={
                                tool.active
                                    ? "flex h-9 items-center justify-center border border-[#8db4d8] bg-[#bcd8f3]"
                                    : "flex h-9 items-center justify-center"
                            }
                        >
                            {tool.icon ? <Icon>{tool.icon}</Icon> : <PanelIcon className="size-7" />}
                        </button>
                    ))}
                </div>
            ))}
        </div>
    );
}

/* ---------- context bar ---------- */

function ContextBar() {
    return (
        <div className="flex h-[42px] shrink-0 items-center bg-gradient-to-b from-[#fbfbfb] to-[#ececee] pb-[2px] pl-[17px] text-[15px] text-[#3a3a3a]">
            <label htmlFor="module">Module:</label>
            <SpinCombo id="module" value="Visualization" className="mr-[17px] ml-[6px] w-[137px]" />
            <label htmlFor="model">Model:</label>
            <SpinCombo id="model" value="C:/Temp/Job-140.odb" className="ml-[6px] w-[199px]" />
            <div className="ml-auto flex items-center pr-[28px]">
                <button type="button" aria-label="First frame" className="mr-[18px]">
                    <svg viewBox="0 0 23 14" className="h-[14px] w-[23px]" fill={NAVY} aria-hidden="true">
                        <path d="M0 0h3v14H0zM13 0v14L3 7zM23 0v14L13 7z" />
                    </svg>
                </button>
                <button type="button" aria-label="Previous frame" className="mr-[25px]">
                    <svg viewBox="0 0 15 14" className="h-[14px] w-[15px]" fill={NAVY} aria-hidden="true">
                        <path d="M10 0v14L0 7zM12 0h3v14h-3z" />
                    </svg>
                </button>
                <button type="button" aria-label="Next frame" className="mr-[18px]">
                    <svg viewBox="0 0 15 14" className="h-[14px] w-[15px]" fill={NAVY} aria-hidden="true">
                        <path d="M5 0v14l10-7zM0 0h3v14H0z" />
                    </svg>
                </button>
                <button type="button" aria-label="Last frame" className="mr-[15px]">
                    <svg viewBox="0 0 23 14" className="h-[14px] w-[23px]" fill={NAVY} aria-hidden="true">
                        <path d="M20 0h3v14h-3zM0 0v14l10-7zM10 0v14l10-7z" />
                    </svg>
                </button>
                <span className="mr-[18px] h-[34px] w-px bg-[#b0b0b0]" />
                <button type="button" aria-label="Frame selector" className="mr-[15px]">
                    <svg viewBox="0 0 15 20" className="h-5 w-[15px]" fill="none" stroke="#4a3f5c" strokeWidth="1.500" aria-hidden="true">
                        <path d="M1 1h7v7H1zM4 6h7v7H4zM8 11h6v7H8z" />
                    </svg>
                </button>
                {[true, false].map((triad) => (
                    <button type="button" key={String(triad)} aria-label={triad ? "View snapshot" : "Snapshot"} className="mr-[8px]">
                        <svg viewBox="0 0 31 26" className="h-[26px] w-[31px]" aria-hidden="true">
                            <path d="M2 4h7l3-3h8l3 3h7v20H2z" fill="#8c9494" stroke="#4c5454" />
                            <path d="M1 7h6v16H1z" fill="#b8c0c0" />
                            <circle cx="18" cy="14" r="8" fill="#dfe8f0" stroke="#4e5e6c" strokeWidth="1.500" />
                            {triad ? (
                                <path d="M18 8v6l-5 4M18 14l5 4" stroke="#3c4470" strokeWidth="2" fill="none" />
                            ) : (
                                <circle cx="18" cy="14" r="5.500" fill="#cfe4f4" />
                            )}
                        </svg>
                    </button>
                ))}
            </div>
        </div>
    );
}

/* ---------- stress contour mesh ---------- */

// outer x/y, inner x/y of each cross-section, and where it sits: -1 and 1 are the bend ends, 2 is a tip
const SECTIONS = [
    [582, 43, 588, 93, -2],
    [487, 56, 493, 105, -1.75],
    [380, 71, 385, 120, -1.48],
    [282, 82, 286, 131, -1.23],
    [196, 90, 201, 138, -1],
    [154, 99, 164, 146, -0.86],
    [110, 117, 132, 159, -0.71],
    [70, 150, 102, 180, -0.53],
    [38, 190, 78, 211, -0.35],
    [17, 238, 64, 248, -0.17],
    [9, 292, 58, 294, 0],
    [16, 349, 64, 340, 0.17],
    [39, 401, 81, 376, 0.35],
    [70, 438, 106, 409, 0.53],
    [106, 467, 131, 430, 0.71],
    [150, 488, 164, 444, 0.86],
    [192, 498, 199, 450, 1],
    [287, 505, 290, 458, 1.23],
    [388, 516, 393, 468, 1.48],
    [492, 528, 496, 479, 1.75],
    [586, 538, 591, 490, 2],
];

const BANDS = ["#0404b4", "#1040c4", "#1a84cc", "#1cbcc4", "#1ec88c", "#22c634", "#54cc20", "#b8d424", "#dcb024", "#d87418", "#c42c0c"];

function sectionAt(p: number) {
    const i = Math.min(SECTIONS.length - 2, Math.floor(p));
    const f = p - i;
    const [a, b, c, d] = [SECTIONS[Math.max(0, i - 1)], SECTIONS[i], SECTIONS[i + 1], SECTIONS[Math.min(SECTIONS.length - 1, i + 2)]];
    return b.map((v, k) => v + 0.5 * f * (c[k] - a[k] + f * (2 * a[k] - 5 * v + 4 * c[k] - d[k] + f * (3 * (v - c[k]) + d[k] - a[k]))));
}

function lerpTable(table: number[][], x: number) {
    for (let i = 1; i < table.length; i++) {
        if (x <= table[i][0]) {
            const [x0, y0] = table[i - 1];
            const [x1, y1] = table[i];
            return y0 + ((y1 - y0) * (x - x0)) / (x1 - x0);
        }
    }
    return table[table.length - 1][1];
}

const CENTER = [[0, 3.7], [0.4, 3.4], [0.6, 3], [0.7, 2.6], [1, 2.3], [1.09, 2], [1.12, 1.6], [1.3, 1.2], [1.6, 1], [1.64, 0.8], [1.85, 0.3], [2, 0]];
const OUTER = [[0, 8.9], [0.5, 8.2], [0.8, 7.8], [1, 7.2], [1.2, 6.1], [1.4, 5.3], [1.6, 4.2], [1.74, 2.9], [1.8, 1.9], [1.86, 0.95], [2, 0.9]];
const INNER = [[0, 10.9], [0.3, 10.2], [0.6, 8.9], [1, 7.2], [1.2, 6.1], [1.4, 5.3], [1.6, 4.2], [1.74, 2.9], [1.8, 1.9], [1.86, 0.95], [2, 0.9]];

function bandColor(pos: number, t: number) {
    const s = Math.abs(pos);
    const c = lerpTable(CENTER, s);
    const e = lerpTable(t < 0.5 ? OUTER : INNER, s);
    const level = c + (e - c) * Math.max(0, (Math.abs(2 * t - 1) - 0.16) / 0.8);
    return BANDS[Math.max(0, Math.min(BANDS.length - 1, Math.floor(level)))];
}

// stations spaced evenly along the centre line
function stations(step: number) {
    const fine = Array.from({ length: 4001 }, (_, i) => sectionAt((i / 4000) * (SECTIONS.length - 1)));
    const out = [fine[0]];
    let run = 0;
    for (let i = 1; i < fine.length; i++) {
        const [a, b] = [fine[i - 1], fine[i]];
        run += Math.hypot((b[0] + b[2] - a[0] - a[2]) / 2, (b[1] + b[3] - a[1] - a[3]) / 2);
        if (run >= step) {
            out.push(b);
            run = 0;
        }
    }
    out.push(fine[fine.length - 1]);
    return out;
}

const across = (s: number[], t: number) => `${(s[0] + (s[2] - s[0]) * t).toFixed(1)} ${(s[1] + (s[3] - s[1]) * t).toFixed(1)}`;

function Mesh() {
    const fills = stations(3);
    const lines = stations(9.4);
    const layers = 30;
    return (
        <g>
            {fills.slice(1).map((b, i) => {
                const a = fills[i];
                return Array.from({ length: layers }, (_, k) => {
                    const color = bandColor((a[4] + b[4]) / 2, (k + 0.5) / layers);
                    return (
                        <path
                            key={`${i}-${k}`}
                            d={`M${across(a, k / layers)}L${across(b, k / layers)}L${across(b, (k + 1) / layers)}L${across(a, (k + 1) / layers)}z`}
                            fill={color}
                            stroke={color}
                            strokeWidth="0.600"
                        />
                    );
                });
            })}
            <g stroke="#0c1c20" strokeOpacity=".75" fill="none">
                {lines.map((s, i) => (
                    <path key={i} d={`M${across(s, 0)}L${across(s, 1)}`} />
                ))}
                {[0, 0.2, 0.4, 0.6, 0.8, 1].map((t) => (
                    <path key={t} d={`M${fills.map((s) => across(s, t)).join("L")}`} strokeWidth={t === 0 || t === 1 ? 1.4 : 1} />
                ))}
            </g>
        </g>
    );
}

/* ---------- XY plot ---------- */

const X_TICKS = [
    [151, "0."],
    [292, ""],
    [434, "50."],
    [577, ""],
    [719, "100."],
    [861, ""],
] as const;

const Y_TICKS = [
    [28, "1.5"],
    [85, ""],
    [143, "1.0"],
    [200, ""],
    [258, "0.5"],
    [315, ""],
    [372, "0.0"],
] as const;

const CURVE =
    "M151 373L157 370L373 195Q380 187 388 172Q410 150 434 130Q475 92 513 92Q552 92 600 127Q625 148 640 169Q648 181 657 192L700 226L770 283L825 329L865 362L873 370L879 372";

function XYPlot() {
    return (
        <section
            aria-label="Stress along path"
            className="absolute top-[49px] right-[5px] bottom-[22px] left-[597px] overflow-hidden bg-white font-['DejaVu_Sans_Mono','Liberation_Mono',monospace]"
        >
            <svg className="absolute inset-0 h-full w-full" aria-hidden="true">
                <rect x="53" y="28" width="100%" height="387" fill="#d7d7d7" stroke="#5c5c5c" strokeWidth="2" />
                {X_TICKS.map(([x, text]) => (
                    <g key={x}>
                        <path d={text ? `M${x} 28v8M${x} 415v-8` : `M${x} 28v4M${x} 415v-5`} stroke="#222" strokeWidth="2" />
                        <text x={x} y="429" textAnchor="middle" fontSize="10" fill="#333">{text}</text>
                    </g>
                ))}
                {Y_TICKS.map(([y, text]) => (
                    <g key={y}>
                        <path d={`M53 ${y}h${text ? 8 : 4}`} stroke="#444" strokeWidth="1.500" />
                        <text x="48" y={y + 3} textAnchor="end" fontSize="10" fill="#333">{text}</text>
                    </g>
                ))}
                <text x="6" y="16" fontSize="10" fill="#333">[&lt;1.E3]</text>
                <path d={CURVE} fill="none" stroke="#4d6a88" strokeWidth="1.200" />
                <g fontFamily="Liberation Sans" fill="#111">
                    <text x="543" y="454" textAnchor="middle" fontSize="19" stroke="#111" strokeWidth=".4">True distance along path</text>
                    <text transform="translate(23 221) rotate(-90)" textAnchor="middle" fontSize="21">Stress</text>
                </g>
            </svg>
            <div className="absolute top-[463px] right-0 flex h-8 w-[187px] items-center border-2 border-r-0 border-l border-[#8c8c8c] pl-[7px] text-[10px] whitespace-nowrap text-[#333]">
                <span className="mr-[19px] h-px w-[41px] shrink-0 bg-[#4d6a88]" />
                S, Mises (Avg: 75%)
            </div>
            <div className="absolute inset-x-0 bottom-0 h-[15px] border-t-2 border-[#d8d8d8] bg-[#f8fbfd]" />
        </section>
    );
}

function Viewport() {
    return (
        <main className="relative mb-[2px] min-h-0 flex-1 overflow-hidden bg-[linear-gradient(#1b2d47,#24364f_30%,#2e4058_52%,#3a4b65_62%,#62728c_76%,#8696ae_90%,#a0afc9)]">
            <svg className="absolute inset-0 h-full w-full" aria-hidden="true">
                <Mesh />
                <g fontFamily="Liberation Sans" fontSize="18" fill="#fff">
                    <text x="114" y="493">Y</text>
                    <text x="165" y="546">X</text>
                </g>
                <path d="M120 536v-20" stroke="#1fae2c" strokeWidth="3" />
                <path d="M120 504l6 13h-12z" fill="#1fae2c" />
                <path d="M125 540h20" stroke="#a8161c" strokeWidth="3" />
                <path d="M156 540l-13 6v-12z" fill="#a8161c" />
                <rect x="115" y="535" width="10" height="10" rx="2" fill="#0c1ca4" />
                <text x="1360" y="20" fontFamily="Liberation Sans" fontSize="15" fill="#c8c84a">Y</text>
                <path d="M1365 34v18M1366 47q10-1 20 4" stroke="#bfb0e4" strokeWidth="3" fill="none" />
                <circle cx="1365" cy="32" r="5.500" fill="#d2c6f4" />
            </svg>
            <XYPlot />
        </main>
    );
}

export default function App() {
    return (
        <div className="flex h-screen flex-col overflow-hidden bg-gradient-to-r from-[#fdfdfd] via-[#f8f8f8] to-[#f0f0f0] font-['Open_Sans','Noto_Sans',sans-serif]">
            <MenuBar />
            <TopToolbar />
            <DisplayToolbar />
            <ViewToolbar />
            <div className="flex min-h-0 flex-1">
                <ResultsPanel />
                <div className="flex min-w-0 flex-1 flex-col">
                    <ContextBar />
                    <div className="flex min-h-0 flex-1">
                        <Toolbox />
                        <div className="flex min-w-0 flex-1 flex-col border-l border-[#c8ced6]">
                            <Viewport />
                        </div>
                    </div>
                </div>
            </div>
        </div>
    );
}
